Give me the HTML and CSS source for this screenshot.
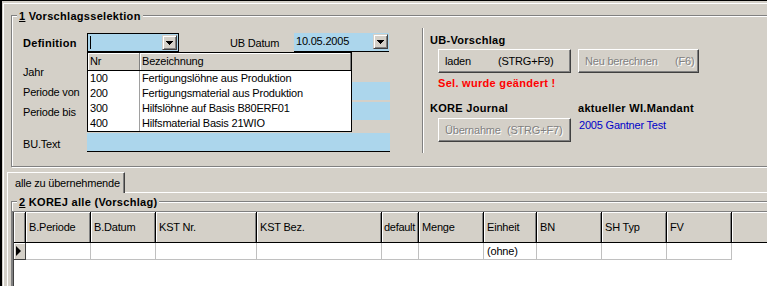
FILE: index.html
```html
<!DOCTYPE html>
<html>
<head>
<meta charset="utf-8">
<link rel="stylesheet" href="styles.css">
</head>
<body>
<div class="win">
 <div class="frame">
  <div class="group g1">
   <div class="gtitle"><u>1</u> Vorschlagsselektion</div>
   <div class="sel">
    <div class="left">
     <div class="row r-def">
      <span class="lbl b">Definition</span>
      <div class="combo"><span class="caret"></span><span class="dd"><svg width="7" height="4" shape-rendering="crispEdges"><path d="M0 0h7v1h-1v1h-1v1h-1v1h-1v-1h-1v-1h-1v-1h-1z"/></svg></span></div>
      <span class="lbl ub">UB Datum</span>
      <div class="date"><span class="dtext">10.05.2005</span><span class="dd"><svg width="7" height="4" shape-rendering="crispEdges"><path d="M0 0h7v1h-1v1h-1v1h-1v1h-1v-1h-1v-1h-1v-1h-1z"/></svg></span></div>
     </div>
     <div class="row r-jahr"><span class="lbl dn">Jahr</span><div class="field short"></div></div>
     <div class="row r-von"><span class="lbl dn">Periode von</span><div class="field"></div></div>
     <div class="row r-bis"><span class="lbl dn">Periode bis</span><div class="field"></div></div>
     <div class="row r-bu"><span class="lbl dn">BU.Text</span><div class="field line"></div></div>

     <div class="dl">
      <div class="dlh"><span class="c1">Nr</span><span class="c2">Bezeichnung</span></div>
      <div class="dlr"><span class="c1">100</span><span class="c2">Fertigungslöhne aus Produktion</span></div>
      <div class="dlr"><span class="c1">200</span><span class="c2">Fertigungsmaterial aus Produktion</span></div>
      <div class="dlr"><span class="c1">300</span><span class="c2">Hilfslöhne auf Basis B80ERF01</span></div>
      <div class="dlr"><span class="c1">400</span><span class="c2">Hilfsmaterial Basis 21WIO</span></div>
     </div>
    </div>
    <div class="vsep"></div>
    <div class="right">
     <div class="h h1">UB-Vorschlag</div>
     <div class="btns">
      <div class="btn w133"><span class="k1">laden</span><span>(STRG+F9)</span></div>
      <div class="btn w121 dis"><span class="k2">Neu berechnen</span><span>(F6)</span></div>
     </div>
     <div class="red">Sel. wurde geändert !</div>
     <div class="kore"><span class="h kj">KORE Journal</span><span class="h">aktueller WI.Mandant</span></div>
     <div class="urow">
      <div class="btn w133 dis"><span class="k3">Übernahme</span><span>(STRG+F7)</span></div>
      <span class="mand">2005 Gantner Test</span>
     </div>
    </div>
   </div>
  </div>

  <div class="tabs"><div class="tab">alle zu übernehmende</div><div class="tabfill"></div></div>
  <div class="panel">
   <div class="group g2">
    <div class="gtitle"><u>2</u> KOREJ alle (Vorschlag)</div>
    <div class="grid">
     <div class="gin">
      <div class="gh">
       <div class="w12"></div>
       <div class="w65">B.Periode</div>
       <div class="w65">B.Datum</div>
       <div class="w101">KST Nr.</div>
       <div class="w125">KST Bez.</div>
       <div class="w37 tight">default</div>
       <div class="w65">Menge</div>
       <div class="w53">Einheit</div>
       <div class="w65">BN</div>
       <div class="w65">SH Typ</div>
       <div class="w65">FV</div>
       <div class="fill"></div>
      </div>
      <div class="gd">
       <div class="w12 ind"><span class="tri"></span></div>
       <div class="w65"></div>
       <div class="w65"></div>
       <div class="w101"></div>
       <div class="w125"></div>
       <div class="w37"></div>
       <div class="w65"></div>
       <div class="w53">(ohne)</div>
       <div class="w65"></div>
       <div class="w65"></div>
       <div class="w65"></div>
       <div class="fill"></div>
      </div>
     </div>
    </div>
   </div>
  </div>
 </div>
</div>
</body>
</html>
```

FILE: styles.css
```css
* { box-sizing: border-box; }
html, body { margin: 0; padding: 0; }
body {
  width: 767px;
  height: 286px;
  overflow: hidden;
  background: #D4D0C8;
  font-family: "Liberation Sans", Arial, sans-serif;
  font-size: 11px;
  letter-spacing: -0.2px;
  color: #000;
}
.win {
  height: 286px;
  border-top: 1px solid #000;
  border-left: 2px solid #000;
  overflow: hidden;
}
.frame {
  margin: 2px 0 0 1px;
  border-top: 1px solid #fff;
  border-left: 1px solid #fff;
  height: 283px;
}

/* group boxes */
.group {
  width: 800px;
  border: 1px solid #808080;
  box-shadow: 1px 1px 0 #fff, inset 1px 1px 0 #fff;
}
.g1 { margin: 11px 0 0 7px; height: 152px; }
.gtitle {
  width: max-content;
  margin: -6px 0 0 5px;
  padding: 0 2px;
  height: 13px;
  line-height: 13px;
  background: #D4D0C8;
  font-weight: bold;
  letter-spacing: 0.3px;
}

.sel { display: flex; }
.left { position: relative; width: 410px; padding-left: 11px; flex: none; }
.row { display: flex; align-items: center; }
.lbl { width: 64px; flex: none; }
.lbl.dn { padding-top: 2px; }
.b { font-weight: bold; letter-spacing: 0.3px; }
.r-def { margin-top: 10px; height: 19px; }
.r-jahr { margin-top: 10px; height: 18px; }
.r-von { margin-top: 2px; height: 18px; }
.r-bis { margin-top: 2px; height: 18px; }
.r-bu { margin-top: 13px; height: 19px; }

.combo {
  width: 92px;
  height: 19px;
  border: 1px solid #000;
  background: #ACD6EC;
  display: flex;
  justify-content: space-between;
  padding: 1px;
  flex: none;
}
.caret { width: 1px; height: 13px; background: #000; margin: 1px 0 0 1px; }
.dd {
  width: 15px;
  height: 15px;
  background: #D4D0C8;
  border: 1px solid;
  border-color: #D4D0C8 #404040 #404040 #D4D0C8;
  box-shadow: inset 1px 1px 0 #fff, inset -1px -1px 0 #808080;
  display: flex;
  align-items: center;
  justify-content: center;
  flex: none;
}
.dd svg { display: block; fill: #000; }
.ub { margin-left: 51px; }
.date {
  width: 95px;
  height: 19px;
  background: #ACD6EC;
  border-bottom: 1px solid #000;
  display: flex;
  justify-content: space-between;
  align-items: flex-start;
  padding: 1px 1px 0 2px;
  flex: none;
}
.dtext { line-height: 14px; }
.field { width: 303px; height: 18px; background: #ACD6EC; flex: none; }
.field.short { width: 60px; }
.field.line { height: 19px; border-bottom: 1px solid #000; }

/* dropdown list over the form */
.dl {
  position: absolute;
  left: 75px;
  top: 29px;
  width: 265px;
  height: 80px;
  border: 1px solid #000;
  background: #fff;
}
.dlh {
  display: flex;
  height: 18px;
  background: #D4D0C8;
  border-bottom: 1px solid #000;
}
.dlh span { line-height: 17px; box-shadow: inset 1px 1px 0 #fff; }
.dlh .c1 { border-right: 1px solid #808080; }
.dlh .c2 { border-right: 1px solid #808080; }
.c1 { width: 52px; padding-left: 2px; flex: none; }
.c2 { flex: 1; padding-left: 2px; white-space: nowrap; }
.dlr { display: flex; height: 15px; line-height: 15px; }
.dlr .c1 { border-right: 1px solid #a0a0a0; }

/* right side */
.vsep {
  margin-top: 5px;
  height: 125px;
  width: 2px;
  border-left: 1px solid #808080;
  border-right: 1px solid #fff;
  flex: none;
}
.right { padding-left: 6px; }
.h { font-weight: bold; line-height: 14px; letter-spacing: 0.3px; }
.h1 { margin-top: 10px; }
.btns { display: flex; gap: 7px; margin: 2px 0 0 8px; }
.btn {
  height: 24px;
  display: flex;
  align-items: center;
  border: 1px solid;
  border-color: #fff #404040 #404040 #fff;
  box-shadow: inset -1px -1px 0 #808080;
  padding-left: 6px;
  background: #D4D0C8;
  white-space: nowrap;
  flex: none;
}
.w133 { width: 133px; }
.w121 { width: 121px; }
.k1 { width: 53px; }
.k2 { width: 90px; }
.k3 { width: 62px; }
.dis { color: #808080; text-shadow: 1px 1px 0 #fff; }
.red {
  color: #f00;
  font-weight: bold;
  line-height: 14px;
  margin: 3px 0 0 8px;
  letter-spacing: 0.3px;
}
.kore { display: flex; margin-top: 11px; }
.kj { width: 148px; }
.urow { display: flex; align-items: flex-start; margin-top: 3px; }
.urow .btn { margin-left: 8px; }
.mand { margin-left: 8px; color: #0000c8; line-height: 14px; }

/* tab strip */
.tabs { display: flex; margin: 5px 0 0 3px; height: 21px; }
.tab {
  width: 118px;
  border-top: 1px solid #fff;
  border-left: 1px solid #fff;
  border-right: 1px solid #404040;
  box-shadow: inset -1px 0 0 #808080;
  padding-left: 7px;
  line-height: 20px;
  flex: none;
}
.tabfill { flex: 1; border-bottom: 1px solid #fff; }
.panel {
  margin-left: 3px;
  border-left: 1px solid #fff;
  padding-top: 8px;
  height: 100px;
}
.g2 { margin-left: 3px; height: 120px; }

/* grid */
.grid {
  margin-top: 2px;
  border-top: 1px solid #808080;
  border-left: 1px solid #808080;
  height: 100px;
}
.gin { border-left: 1px solid #404040; background: #fff; height: 100%; }
.gh {
  display: flex;
  height: 31px;
  border-bottom: 1px solid #000;
  background: #D4D0C8;
}
.gh > div {
  height: 30px;
  line-height: 30px;
  padding-left: 3px;
  border-right: 1px solid #000;
  box-shadow: inset 1px 1px 0 #fff, inset -1px 0 0 #808080;
  flex: none;
  white-space: nowrap;
  overflow: hidden;
}
.gh > .tight { padding-left: 2px; letter-spacing: -0.3px; }
.gh > .fill { flex: 1; border-right: none; box-shadow: inset 1px 1px 0 #fff; }
.gd { display: flex; height: 17px; }
.gd > div {
  height: 17px;
  line-height: 16px;
  padding-left: 3px;
  border-right: 1px solid #c0c0c0;
  border-bottom: 1px solid #c0c0c0;
  flex: none;
  white-space: nowrap;
}
.gd > .ind {
  background: #D4D0C8;
  border-color: #404040;
  box-shadow: inset 1px 1px 0 #fff;
  display: flex;
  align-items: center;
  padding-left: 2px;
}
.tri {
  width: 0;
  height: 0;
  border-left: 5px solid #000;
  border-top: 5px solid transparent;
  border-bottom: 5px solid transparent;
}
.gd > .fill { flex: 1; border: none; }
.w12 { width: 12px; }
.w37 { width: 37px; }
.w53 { width: 53px; }
.w65 { width: 65px; }
.w101 { width: 101px; }
.w125 { width: 125px; }
```
